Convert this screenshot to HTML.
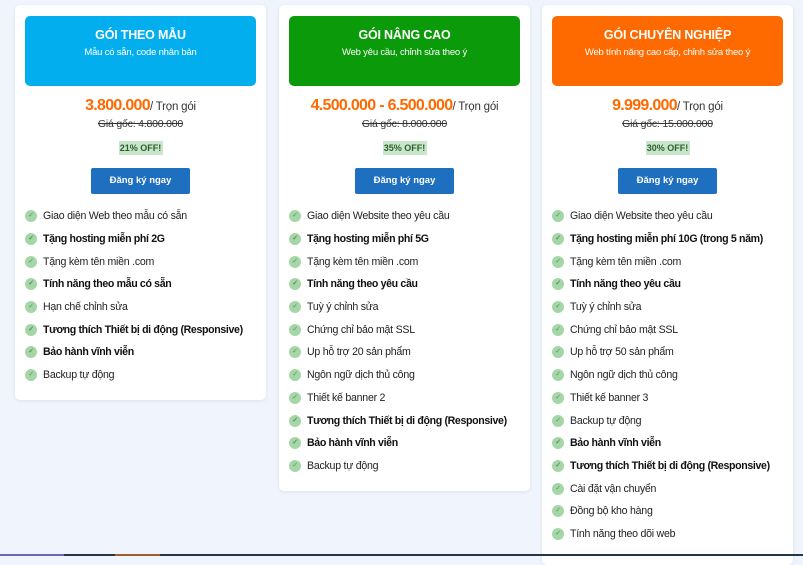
<!DOCTYPE html>
<html><head><meta charset="utf-8"><style>
*{margin:0;padding:0;box-sizing:border-box}
body{width:803px;height:556px;overflow:hidden;background:#f0f4fd;font-family:"Liberation Sans",sans-serif;position:relative}
.card{position:absolute;top:5px;width:251px;background:#fff;border-radius:5px;box-shadow:0 1px 4px rgba(0,0,0,.08)}
.hd{margin:11px 10px 0;height:70px;border-radius:5px;color:#fff;text-align:center;padding-top:12px}
.hd h3{font-size:12.5px;font-weight:bold;letter-spacing:-.2px}
.hd p{font-size:9.5px;margin-top:5px;letter-spacing:-.2px}
.pr{text-align:center;margin-top:11px;font-size:11.5px;color:#333;letter-spacing:-.2px}
.pr b{color:#ff6a00;font-size:16px;letter-spacing:-.7px}
.old{text-align:center;font-size:10.5px;color:#333;text-decoration:line-through;margin-top:3px;letter-spacing:-.2px}
.off{display:block;width:44px;margin:11px auto 0;background:#c8e6c9;color:#2e5e2e;font-size:9px;font-weight:bold;text-align:center;padding:2px 0}
.btn{display:block;width:99px;height:26px;margin:13px auto 0;background:#1e6fbf;color:#fff;font-size:9.5px;font-weight:bold;text-align:center;line-height:26px;border-radius:2px}
ul{list-style:none;margin:11px 0 0 10px}
li{height:22.7px;font-size:10.6px;color:#222;display:flex;align-items:center;letter-spacing:-.25px;white-space:nowrap}
li.b{font-weight:bold;color:#111;letter-spacing:-.35px}
li:before{content:"✓";width:12px;height:12px;border-radius:50%;background:#a5d6a7;color:#5b8c5e;font-size:7px;line-height:12px;text-align:center;margin-right:6px;flex:none}
.bar{position:absolute;bottom:0;height:2px}
</style></head><body>
<div class="card" style="left:15px;height:395px">
<div class="hd" style="background:#03aeef"><h3>GÓI THEO MẪU</h3><p>Mẫu có sẵn, code nhân bản</p></div>
<div class="pr"><b>3.800.000</b>/ Trọn gói</div><div class="old">Giá gốc: 4.800.000</div>
<span class="off">21% OFF!</span><span class="btn">Đăng ký ngay</span>
<ul><li>Giao diện Web theo mẫu có sẵn</li><li class="b">Tặng hosting miễn phí 2G</li><li>Tặng kèm tên miền .com</li><li class="b">Tính năng theo mẫu có sẵn</li><li>Hạn chế chỉnh sửa</li><li class="b">Tương thích Thiết bị di động (Responsive)</li><li class="b">Bảo hành vĩnh viễn</li><li>Backup tự động</li></ul>
</div>
<div class="card" style="left:279px;height:486px">
<div class="hd" style="background:#0a9a0a"><h3>GÓI NÂNG CAO</h3><p>Web yêu cầu, chỉnh sửa theo ý</p></div>
<div class="pr"><b>4.500.000 - 6.500.000</b>/ Trọn gói</div><div class="old">Giá gốc: 8.000.000</div>
<span class="off">35% OFF!</span><span class="btn">Đăng ký ngay</span>
<ul><li>Giao diện Website theo yêu cầu</li><li class="b">Tặng hosting miễn phí 5G</li><li>Tặng kèm tên miền .com</li><li class="b">Tính năng theo yêu cầu</li><li>Tuỳ ý chỉnh sửa</li><li>Chứng chỉ bảo mật SSL</li><li>Up hỗ trợ 20 sản phẩm</li><li>Ngôn ngữ dịch thủ công</li><li>Thiết kế banner 2</li><li class="b">Tương thích Thiết bị di động (Responsive)</li><li class="b">Bảo hành vĩnh viễn</li><li>Backup tự động</li></ul>
</div>
<div class="card" style="left:542px;height:560px">
<div class="hd" style="background:#ff6a00"><h3>GÓI CHUYÊN NGHIỆP</h3><p>Web tính năng cao cấp, chỉnh sửa theo ý</p></div>
<div class="pr"><b>9.999.000</b>/ Trọn gói</div><div class="old">Giá gốc: 15.000.000</div>
<span class="off">30% OFF!</span><span class="btn">Đăng ký ngay</span>
<ul><li>Giao diện Website theo yêu cầu</li><li class="b">Tặng hosting miễn phí 10G (trong 5 năm)</li><li>Tặng kèm tên miền .com</li><li class="b">Tính năng theo yêu cầu</li><li>Tuỳ ý chỉnh sửa</li><li>Chứng chỉ bảo mật SSL</li><li>Up hỗ trợ 50 sản phẩm</li><li>Ngôn ngữ dịch thủ công</li><li>Thiết kế banner 3</li><li>Backup tự động</li><li class="b">Bảo hành vĩnh viễn</li><li class="b">Tương thích Thiết bị di động (Responsive)</li><li>Cài đặt vận chuyển</li><li>Đồng bộ kho hàng</li><li>Tính năng theo dõi web</li></ul>
</div>
<div class="bar" style="left:0;width:64px;background:#6a6ab0"></div>
<div class="bar" style="left:64px;width:51px;background:#263545"></div>
<div class="bar" style="left:115px;width:45px;background:#a0602a"></div>
<div class="bar" style="left:160px;width:643px;background:#263545"></div>
</body></html>
